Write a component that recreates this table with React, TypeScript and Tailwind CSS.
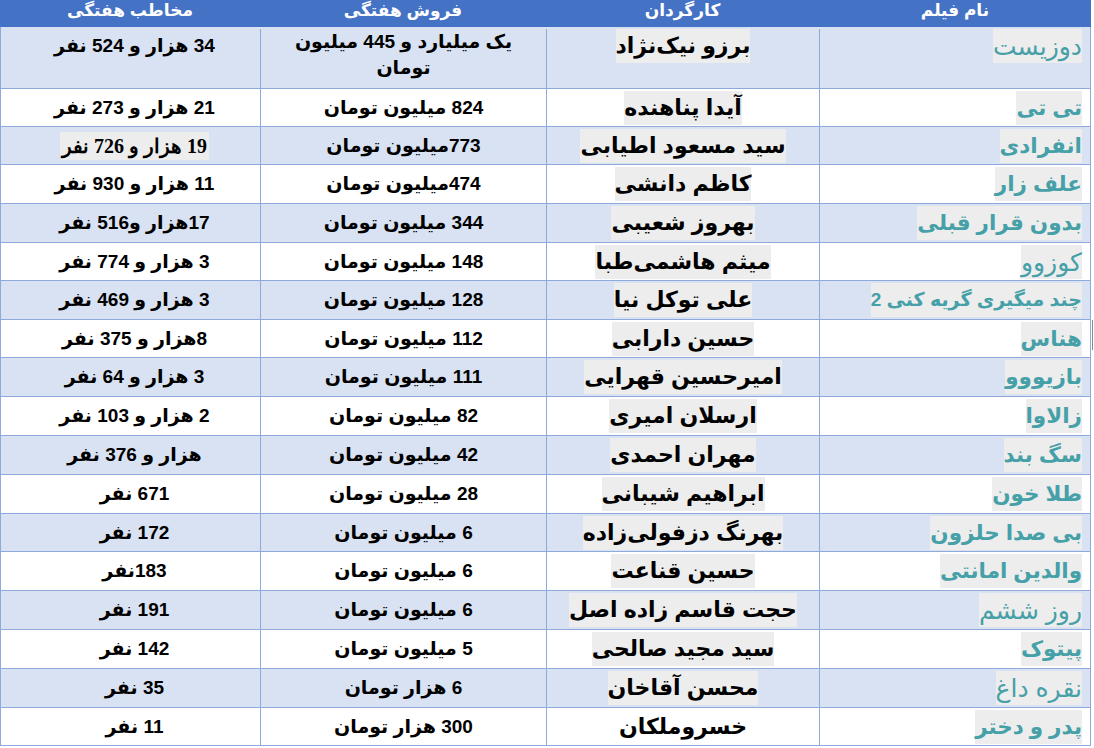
import React from 'react';

type Row = {
  film: string;
  director: string;
  sales: string;
  audience: string;
  filmBold?: boolean;
  filmSmall?: boolean;
  noHighlight?: boolean;
  serifAudience?: boolean;
};

const ROWS: Row[] = [
  { film: 'دوزیست', director: 'برزو نیک‌نژاد', sales: 'یک میلیارد و 445 میلیون تومان', audience: '34 هزار و 524 نفر' },
  { film: 'تی تی', director: 'آیدا پناهنده', sales: '824 میلیون تومان', audience: '21 هزار و 273 نفر', filmBold: true },
  { film: 'انفرادی', director: 'سید مسعود اطیابی', sales: '773میلیون تومان', audience: '19 هزار و 726 نفر', filmBold: true, serifAudience: true },
  { film: 'علف زار', director: 'کاظم دانشی', sales: '474میلیون تومان', audience: '11 هزار و 930 نفر', filmBold: true },
  { film: 'بدون قرار قبلی', director: 'بهروز شعیبی', sales: '344 میلیون تومان', audience: '17هزار و516 نفر', filmBold: true },
  { film: 'کوزوو', director: 'میثم هاشمی‌طبا', sales: '148 میلیون تومان', audience: '3 هزار و 774 نفر' },
  { film: 'چند میگیری گریه کنی 2', director: 'علی توکل نیا', sales: '128 میلیون تومان', audience: '3 هزار و 469 نفر', filmBold: true, filmSmall: true },
  { film: 'هناس', director: 'حسین دارابی', sales: '112 میلیون تومان', audience: '8هزار و 375 نفر', filmBold: true },
  { film: 'بازیووو', director: 'امیرحسین قهرایی', sales: '111 میلیون تومان', audience: '3 هزار و 64 نفر', filmBold: true },
  { film: 'زالاوا', director: 'ارسلان امیری', sales: '82 میلیون تومان', audience: '2 هزار و 103 نفر', filmBold: true },
  { film: 'سگ بند', director: 'مهران احمدی', sales: '42 میلیون تومان', audience: 'هزار و 376 نفر', filmBold: true },
  { film: 'طلا خون', director: 'ابراهیم شیبانی', sales: '28 میلیون تومان', audience: '671 نفر', filmBold: true },
  { film: 'بی صدا حلزون', director: 'بهرنگ دزفولی‌زاده', sales: '6 میلیون تومان', audience: '172 نفر', filmBold: true },
  { film: 'والدین امانتی', director: 'حسین قناعت', sales: '6 میلیون تومان', audience: '183نفر', filmBold: true },
  { film: 'روز ششم', director: 'حجت قاسم زاده اصل', sales: '6 میلیون تومان', audience: '191 نفر' },
  { film: 'پیتوک', director: 'سید مجید صالحی', sales: '5 میلیون تومان', audience: '142 نفر', filmBold: true },
  { film: 'نقره داغ', director: 'محسن آقاخان', sales: '6 هزار تومان', audience: '35 نفر' },
  { film: 'پدر و دختر', director: 'خسروملکان', sales: '300 هزار تومان', audience: '11 نفر', filmBold: true, noHighlight: true },
];

const HEIGHTS = [62, 38, 38, 39, 39, 38, 39, 38, 39, 39, 39, 39, 38, 39, 39, 39, 39, 38];

export default function App() {
  return (
    <div className="w-[1094px] h-[748px] bg-white font-['Liberation_Sans','DejaVu_Sans',sans-serif] relative overflow-hidden">
      <div dir="rtl" className="w-[1091px]">
        {/* header */}
        <div className="grid grid-cols-[272px_273px_286px_260px] h-[27px] bg-[#4472c4] text-white font-bold text-[17px] leading-[22px]">
          <div className="text-center">نام فیلم</div>
          <div className="text-center">کارگردان</div>
          <div className="text-center">فروش هفتگی</div>
          <div className="text-center">مخاطب هفتگی</div>
        </div>

        {/* body */}
        <div className="border-l border-r border-[#8eaadb]">
          {ROWS.map((r, i) => (
            <div
              key={r.film}
              style={{ height: HEIGHTS[i] }}
              className={`grid grid-cols-[271px_273px_286px_259px] border-b border-[#8eaadb] ${
                i % 2 === 0 ? 'bg-[#d9e2f3]' : 'bg-white'
              } ${i === 0 ? 'items-start pt-[2px]' : 'items-center'}`}
            >
              <div className="border-l border-[#8eaadb] h-full flex items-center pr-[8px]">
                <span
                  className={`inline-block bg-[#ededed] text-[#46a0a8] leading-[34px] ${
                    r.filmSmall ? 'text-[19px]' : r.filmBold ? 'text-[21.5px]' : 'text-[25px]'
                  } ${r.filmBold ? 'font-bold' : 'font-normal'} ${i === 0 ? 'self-start' : ''}`}
                >
                  {r.film}
                </span>
              </div>
              <div className="border-l border-[#8eaadb] h-full flex justify-center items-center">
                <span
                  className={`inline-block text-black font-bold text-[22px] leading-[34px] ${
                    r.noHighlight ? '' : 'bg-[#ededed]'
                  } ${i === 0 ? 'self-start' : ''}`}
                >
                  {r.director}
                </span>
              </div>
              <div className="border-l border-[#8eaadb] h-full flex justify-center items-center">
                <span className={`text-center text-black font-bold text-[19px] leading-[26px] ${i === 0 ? 'self-start w-[250px]' : ''}`}>
                  {r.sales}
                </span>
              </div>
              <div className="h-full flex justify-center items-center pl-[8px]">
                {r.serifAudience ? (
                  <span className="inline-block bg-[#ededed] px-[2px] font-['Liberation_Serif','DejaVu_Serif',serif] font-bold text-[20px] leading-[28px] text-black">
                    {r.audience}
                  </span>
                ) : (
                  <span className={`text-black font-bold text-[19px] leading-[26px] ${i === 0 ? 'self-start pt-[4px]' : ''}`}>
                    {r.audience}
                  </span>
                )}
              </div>
            </div>
          ))}
        </div>
      </div>
      {/* text cursor mark at right edge */}
      <div className="absolute left-[1092px] top-[320px] w-[1px] h-[30px] bg-[#888]" />
    </div>
  );
}
